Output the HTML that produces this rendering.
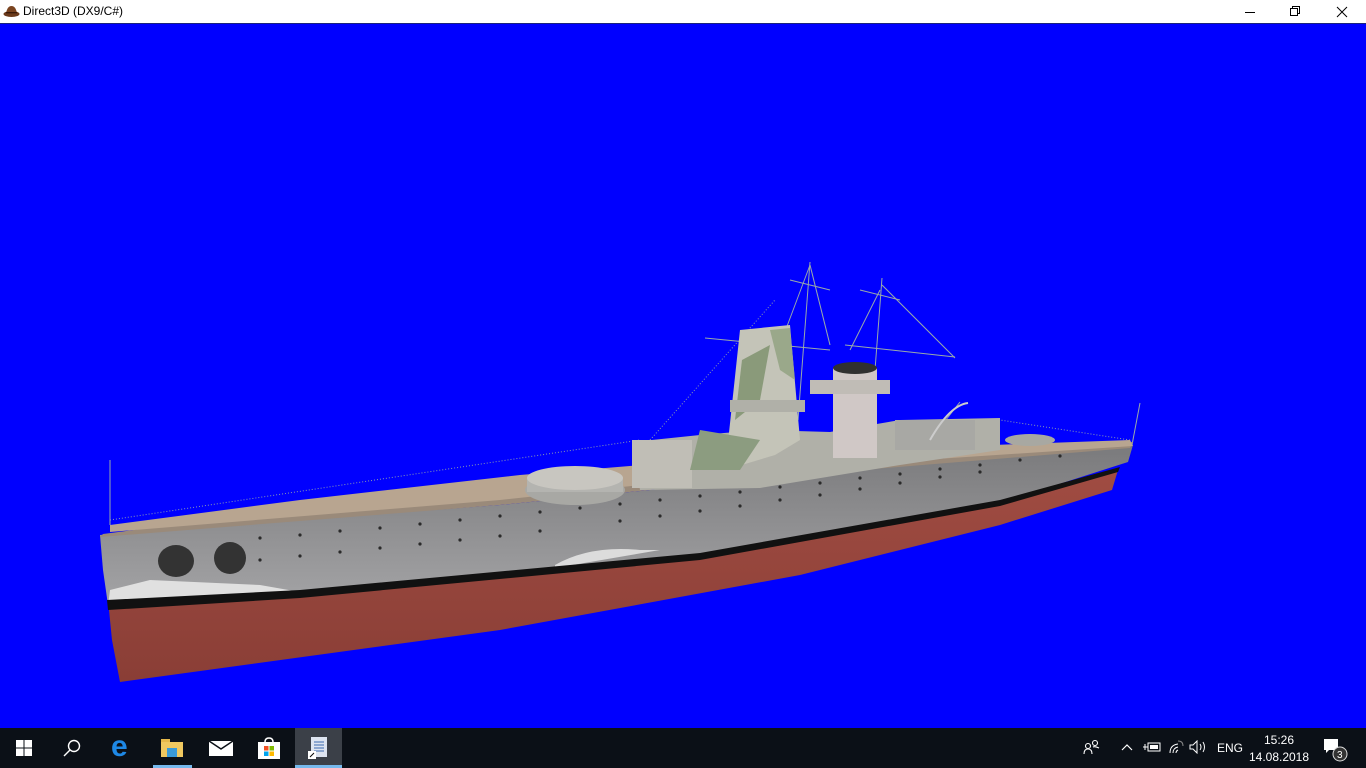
<!DOCTYPE html>
<html><head><meta charset="utf-8"><style>
html,body{margin:0;padding:0;width:1366px;height:768px;overflow:hidden;font-family:"Liberation Sans",sans-serif}
#title{position:absolute;left:0;top:0;width:1366px;height:23px;background:#fff;border-bottom:1px solid #1a237e}
#title .t{position:absolute;left:23px;top:4px;font-size:12px;color:#000}
#main{position:absolute;left:0;top:24px;width:1366px;height:704px;background:#0000ff}
#tb{position:absolute;left:0;top:728px;width:1366px;height:40px;background:#0b1017;color:#fff}
.ic{position:absolute}
</style></head><body>
<div id="title">
<svg class="ic" style="left:3px;top:4px" width="17" height="14"><ellipse cx="8.5" cy="10" rx="8" ry="3" fill="#6b3a1a"/><path d="M3 10 Q4 2 8.5 2 Q13 2 14 10Z" fill="#7a4420"/><rect x="3" y="8" width="11" height="1.5" fill="#3a1a08"/></svg>
<span class="t">Direct3D (DX9/C#)</span>
<svg class="ic" style="left:1244px;top:5px" width="110" height="14" stroke="#000" fill="none" stroke-width="1"><line x1="1" y1="7.5" x2="11" y2="7.5"/><rect x="46.5" y="3.5" width="7" height="7"/><path d="M48.5 3.5V1.5H55.5V8.5H53.5"/><path d="M93 2L103 12M103 2L93 12"/></svg>
</div>
<div id="main">
<svg width="1366" height="704" viewBox="0 24 1366 704">
<defs>
<linearGradient id="hg" x1="0" y1="0" x2="0" y2="1"><stop offset="0" stop-color="#7a7a7c"/><stop offset="1" stop-color="#a4a4a6"/></linearGradient>
<linearGradient id="rg" x1="0" y1="0" x2="0" y2="1"><stop offset="0" stop-color="#a04c42"/><stop offset="1" stop-color="#8a3e36"/></linearGradient>
</defs>
<g stroke="#9aa" stroke-width="1" fill="none">
<line x1="810" y1="262" x2="798" y2="420"/>
<line x1="882" y1="278" x2="875" y2="370"/>
<line x1="110" y1="460" x2="110" y2="525"/>
<line x1="1140" y1="403" x2="1132" y2="445"/>
<line x1="705" y1="338" x2="830" y2="350"/>
<line x1="845" y1="345" x2="955" y2="357"/>
<line x1="790" y1="280" x2="830" y2="290"/>
<line x1="860" y1="290" x2="900" y2="300"/>
<line x1="882" y1="285" x2="955" y2="358"/>
<line x1="880" y1="290" x2="850" y2="350"/>
<line x1="810" y1="265" x2="780" y2="345"/>
<line x1="810" y1="265" x2="830" y2="345"/>
<line x1="960" y1="402" x2="930" y2="440"/>
</g>
<g stroke="#8a9ab0" stroke-width="1" stroke-dasharray="1 2" fill="none">
<line x1="110" y1="520" x2="640" y2="440"/>
<line x1="650" y1="440" x2="775" y2="300"/>
<line x1="1130" y1="440" x2="1000" y2="420"/>
</g>
<path d="M108 600 L700 555 L1000 500 L1118 470 L1112 490 L1000 525 L800 575 L500 630 L120 682 L112 640Z" fill="url(#rg)"/>
<path d="M100 535 L500 505 L800 475 L1133 445 L1128 462 L1000 503 L700 555 L300 592 L108 605 L103 570Z" fill="url(#hg)"/>
<path d="M110 590 L150 580 L260 585 L300 592 L108 606Z" fill="#e0e0e0"/>
<path d="M555 565 Q590 545 640 550 L660 550 L555 568Z" fill="#dcdcdc"/>
<path d="M107 600 L300 590 L700 553 L1000 500 L1120 467 L1118 472 L1000 506 L700 560 L300 598 L108 610Z" fill="#111"/>
<path d="M103 534 L300 508 L520 478 L800 455 L1133 442 L1130 448 L800 475 L500 505 L100 537Z" fill="#9a8a7a"/>
<path d="M110 525 L300 500 L520 475 L800 452 L1130 440 L1133 446 L800 468 L500 500 L110 532Z" fill="#b8a590"/>
<g fill="#2a2a2a">
<circle cx="260" cy="538" r="1.6"/><circle cx="300" cy="535" r="1.6"/><circle cx="340" cy="531" r="1.6"/><circle cx="380" cy="528" r="1.6"/><circle cx="420" cy="524" r="1.6"/><circle cx="460" cy="520" r="1.6"/><circle cx="500" cy="516" r="1.6"/><circle cx="540" cy="512" r="1.6"/><circle cx="580" cy="508" r="1.6"/><circle cx="620" cy="504" r="1.6"/><circle cx="660" cy="500" r="1.6"/><circle cx="700" cy="496" r="1.6"/><circle cx="740" cy="492" r="1.6"/><circle cx="780" cy="487" r="1.6"/><circle cx="820" cy="483" r="1.6"/><circle cx="860" cy="478" r="1.6"/><circle cx="900" cy="474" r="1.6"/><circle cx="940" cy="469" r="1.6"/><circle cx="980" cy="465" r="1.6"/><circle cx="1020" cy="460" r="1.6"/><circle cx="1060" cy="456" r="1.6"/>
<circle cx="260" cy="560" r="1.6"/><circle cx="300" cy="556" r="1.6"/><circle cx="340" cy="552" r="1.6"/><circle cx="380" cy="548" r="1.6"/><circle cx="420" cy="544" r="1.6"/><circle cx="460" cy="540" r="1.6"/><circle cx="500" cy="536" r="1.6"/><circle cx="540" cy="531" r="1.6"/><circle cx="620" cy="521" r="1.6"/><circle cx="660" cy="516" r="1.6"/><circle cx="700" cy="511" r="1.6"/><circle cx="740" cy="506" r="1.6"/><circle cx="780" cy="500" r="1.6"/><circle cx="820" cy="495" r="1.6"/><circle cx="860" cy="489" r="1.6"/><circle cx="900" cy="483" r="1.6"/><circle cx="940" cy="477" r="1.6"/><circle cx="980" cy="472" r="1.6"/>
</g>
<ellipse cx="176" cy="561" rx="18" ry="16" fill="#333"/><ellipse cx="230" cy="558" rx="16" ry="16" fill="#333"/>
<ellipse cx="575" cy="490" rx="50" ry="15" fill="#a8a8a4"/><rect x="527" y="478" width="96" height="14" fill="#b4b4b0"/><ellipse cx="575" cy="478" rx="48" ry="12" fill="#c8c6c0"/>
<path d="M632 442 L700 435 L760 430 L830 432 L900 420 L1000 418 L1000 450 L900 465 L760 488 L640 490Z" fill="#b0b0a8"/>
<rect x="632" y="440" width="60" height="48" fill="#c0beb6"/>
<path d="M725 470 L740 330 L790 325 L800 440 L775 455Z" fill="#c4c4b8"/>
<path d="M742 360 L770 345 L760 400 L735 420Z" fill="#8a9a7a"/>
<path d="M770 330 L790 328 L795 380 L780 370Z" fill="#9aa88a"/>
<rect x="730" y="400" width="75" height="12" fill="#b0b0a8"/>
<rect x="833" y="368" width="44" height="90" fill="#d0c8c6"/>
<ellipse cx="855" cy="368" rx="22" ry="6" fill="#303030"/>
<rect x="810" y="380" width="80" height="14" fill="#c0bcb6"/>
<rect x="895" y="420" width="80" height="30" fill="#a8a8a4"/>
<path d="M700 430 L760 440 L740 470 L690 470Z" fill="#8c9c80"/>
<path d="M930 440 Q950 405 968 403" stroke="#ccc" stroke-width="2" fill="none"/>
<ellipse cx="1030" cy="440" rx="25" ry="6" fill="#a8a8a2"/>
</svg>
</div>
<div id="tb">
<svg class="ic" style="left:16px;top:12px" width="16" height="16" fill="#fff"><rect x="0" y="0" width="7.5" height="7.5"/><rect x="8.5" y="0" width="7.5" height="7.5"/><rect x="0" y="8.5" width="7.5" height="7.5"/><rect x="8.5" y="8.5" width="7.5" height="7.5"/></svg>
<svg class="ic" style="left:63px;top:11px" width="18" height="18" stroke="#fff" fill="none" stroke-width="1.4"><circle cx="11" cy="7" r="5.5"/><line x1="7" y1="11" x2="1" y2="17"/></svg>
<div class="ic" style="left:111px;top:4px;font:bold 30px 'Liberation Sans',sans-serif;color:#1e88e5;line-height:30px">e</div>
<svg class="ic" style="left:161px;top:11px" width="22" height="18"><rect x="0" y="0" width="9" height="4" fill="#e6b84a"/><rect x="0" y="3" width="22" height="15" fill="#f0c860"/><rect x="6" y="9" width="10" height="9" fill="#3a9ad8"/></svg>
<div class="ic" style="left:153px;top:37px;width:39px;height:3px;background:#76b9ed"></div>
<svg class="ic" style="left:209px;top:13px" width="24" height="15"><rect width="24" height="15" fill="#fff"/><path d="M0 0L12 8L24 0" stroke="#0b1017" stroke-width="1.5" fill="none"/></svg>
<svg class="ic" style="left:258px;top:9px" width="22" height="22"><path d="M7 5Q7 1 11 1Q15 1 15 5" stroke="#fff" fill="none" stroke-width="1.5"/><rect y="5" width="22" height="17" fill="#fff"/><rect x="6" y="9" width="4.5" height="4.5" fill="#f25022"/><rect x="11.5" y="9" width="4.5" height="4.5" fill="#7fba00"/><rect x="6" y="14.5" width="4.5" height="4.5" fill="#00a4ef"/><rect x="11.5" y="14.5" width="4.5" height="4.5" fill="#ffb900"/></svg>
<div class="ic" style="left:295px;top:0;width:47px;height:40px;background:#3b4048"></div>
<div class="ic" style="left:295px;top:37px;width:47px;height:3px;background:#76b9ed"></div>
<svg class="ic" style="left:307px;top:9px" width="22" height="24"><rect x="4" y="0" width="16" height="20" fill="#dde4f0"/><g stroke="#3a6ab0"><line x1="7" y1="5" x2="17" y2="5"/><line x1="7" y1="8" x2="17" y2="8"/><line x1="7" y1="11" x2="17" y2="11"/><line x1="7" y1="14" x2="17" y2="14"/></g><rect x="1" y="14" width="8" height="8" fill="#fff"/><path d="M3 20L7 16" stroke="#000"/></svg>
<svg class="ic" style="left:1083px;top:11px" width="18" height="16" stroke="#fff" fill="none" stroke-width="1.1"><circle cx="5" cy="7" r="2.5"/><path d="M1 15Q1 10 5 10Q9 10 9 15"/><circle cx="12" cy="4" r="2.5"/><path d="M10 8Q12 7 16 9"/></svg>
<svg class="ic" style="left:1121px;top:15px" width="12" height="8" stroke="#fff" fill="none" stroke-width="1.2"><path d="M1 7L6 2L11 7"/></svg>
<svg class="ic" style="left:1143px;top:13px" width="18" height="12"><rect x="5" y="2" width="12" height="8" fill="none" stroke="#fff"/><rect x="7" y="4" width="8" height="4" fill="#fff"/><path d="M0 6H5M2 3V9" stroke="#fff"/></svg>
<svg class="ic" style="left:1168px;top:12px" width="16" height="14" stroke="#fff" fill="none"><path d="M2 13Q2 5 10 4"/><path d="M5 13Q5 8 10 7"/><path d="M8 13Q8 11 10 10"/><path d="M10 1Q15 1 15 6" stroke="#888"/></svg>
<svg class="ic" style="left:1189px;top:12px" width="20" height="14" stroke="#fff" fill="none"><path d="M1 5H4L8 1V13L4 9H1Z"/><path d="M11 4Q13 7 11 10M14 2Q17 7 14 12"/></svg>
<div class="ic" style="left:1217px;top:13px;font-size:12px">ENG</div>
<div class="ic" style="left:1248px;top:4px;width:62px;text-align:center;font-size:12px;line-height:17px">15:26<br>14.08.2018</div>
<svg class="ic" style="left:1323px;top:10px" width="26" height="24"><path d="M1 1H15V12H6L3 15V12H1Z" fill="#fff"/><circle cx="17" cy="16" r="7" fill="#333" stroke="#ddd"/><text x="14" y="20" fill="#fff" font-size="10" font-family="Liberation Sans">3</text></svg>
</div>
</body></html>
